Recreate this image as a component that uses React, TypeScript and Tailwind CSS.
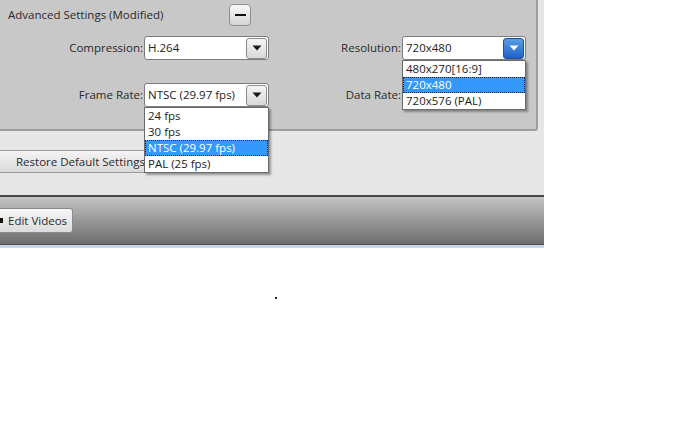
import React from "react";

const font = { fontFamily: '"Open Sans", "Noto Sans", sans-serif' };

function ArrowButton({ active }: { active?: boolean }) {
  return (
    <div
      className={`flex h-[21px] w-[21px] items-center justify-center rounded-[3px] border ${
        active
          ? "border-[#1d4f9c] bg-gradient-to-b from-[#5a9de6] to-[#1e62c4]"
          : "border-[#8c8c8c] bg-gradient-to-b from-[#f6f6f6] to-[#d8d8d8]"
      }`}
    >
      <svg width="10" height="6" viewBox="0 0 10 6">
        <path d="M0.5 0.5 L9.5 0.5 L5 5.5 Z" fill={active ? "#ffffff" : "#1a1a1a"} />
      </svg>
    </div>
  );
}

function Select({ value, width, active }: { value: string; width: string; active?: boolean }) {
  return (
    <div
      className={`flex h-[24px] ${width} items-center justify-between rounded-[3px] border border-[#7c7c7c] bg-white pl-[3px] pr-[1px]`}
    >
      <span className="text-[11.5px] leading-none text-[#1c1c1c]">{value}</span>
      <ArrowButton active={active} />
    </div>
  );
}

function DropList({ items, selected, className }: { items: string[]; selected: number; className: string }) {
  return (
    <div
      className={`absolute border border-[#6a6a6a] bg-white shadow-[2px_2px_2px_rgba(0,0,0,0.35)] ${className}`}
    >
      {items.map((it, i) => (
        <div
          key={it}
          className={`flex h-[16px] items-center pl-[3px] text-[11.5px] leading-none ${
            i === selected
              ? "bg-[#3399ff] text-white outline-1 -outline-offset-1 outline-dotted outline-[#0a2a55]"
              : "text-[#1c1c1c]"
          }`}
        >
          {it}
        </div>
      ))}
    </div>
  );
}

export default function App() {
  return (
    <div className="relative h-[423px] w-[687px] overflow-hidden bg-white" style={font}>
      <div className="w-[544px] bg-[#e6e6e6]">
        {/* Advanced settings group */}
        <div className="h-[131px] w-[538px] rounded-br-[3px] border-b-2 border-r-2 border-[#9e9e9e] bg-[#c8c8c8]">
          <div className="flex h-[29px] items-center pt-[1px]">
            <span className="w-[229px] pl-[8px] text-[11.5px] text-[#2a2a2a]">Advanced Settings (Modified)</span>
            <div className="flex h-[22px] w-[22px] items-center justify-center rounded-[4px] border border-[#8e8e8e] bg-gradient-to-b from-[#f8f8f8] to-[#d6d6d6]">
              <div className="h-[2px] w-[11px] bg-[#111111]" />
            </div>
          </div>

          <div className="mt-[7px] flex items-center">
            <span className="w-[144px] pr-[1px] text-right text-[11.5px] text-[#2a2a2a]">Compression:</span>
            <Select value="H.264" width="w-[125px]" />
            <span className="w-[133px] pr-[1px] text-right text-[11.5px] text-[#2a2a2a]">Resolution:</span>
            <Select value="720x480" width="w-[124px]" active />
          </div>

          <div className="mt-[23px] flex items-center">
            <span className="w-[144px] pr-[1px] text-right text-[11.5px] text-[#2a2a2a]">Frame Rate:</span>
            <Select value="NTSC (29.97 fps)" width="w-[125px]" />
            <span className="w-[133px] pr-[1px] text-right text-[11.5px] text-[#2a2a2a]">Data Rate:</span>
          </div>
        </div>

        {/* Restore row */}
        <div className="h-[64px] pt-[19px]">
          <div className="flex h-[23px] w-[162px] items-center rounded-r-[3px] border border-l-0 border-[#9a9a9a] bg-gradient-to-b from-[#f4f4f4] to-[#dadada] pl-[16px] text-[11.5px] text-[#2a2a2a]">
            Restore Default Settings
          </div>
        </div>

        {/* Bottom toolbar */}
        <div className="h-[2px] bg-[#474747]" />
        <div className="h-[47px] bg-gradient-to-b from-[#c4c4c4] to-[#6e6e6e] pt-[11px]">
          <div className="flex h-[25px] w-[73px] items-center rounded-r-[3px] border border-l-0 border-[#8a8a8a] bg-gradient-to-b from-[#f6f6f6] to-[#dcdcdc] text-[11.5px] text-[#2a2a2a]">
            <div className="h-[5px] w-[3px] bg-[#111111]" />
            <span className="pl-[5px]">Edit Videos</span>
          </div>
        </div>
        <div className="h-[1px] bg-[#505050]" />
      </div>
      <div className="h-[3px] w-[544px] bg-[#c6d6ea]" />

      <div className="ml-[275px] mt-[49px] h-[2px] w-[2px] bg-[#222222]" />

      <DropList
        className="left-[144px] top-[107px] w-[125px]"
        items={["24 fps", "30 fps", "NTSC (29.97 fps)", "PAL (25 fps)"]}
        selected={2}
      />
      <DropList
        className="left-[402px] top-[60px] w-[124px]"
        items={["480x270[16:9]", "720x480", "720x576 (PAL)"]}
        selected={1}
      />
    </div>
  );
}
